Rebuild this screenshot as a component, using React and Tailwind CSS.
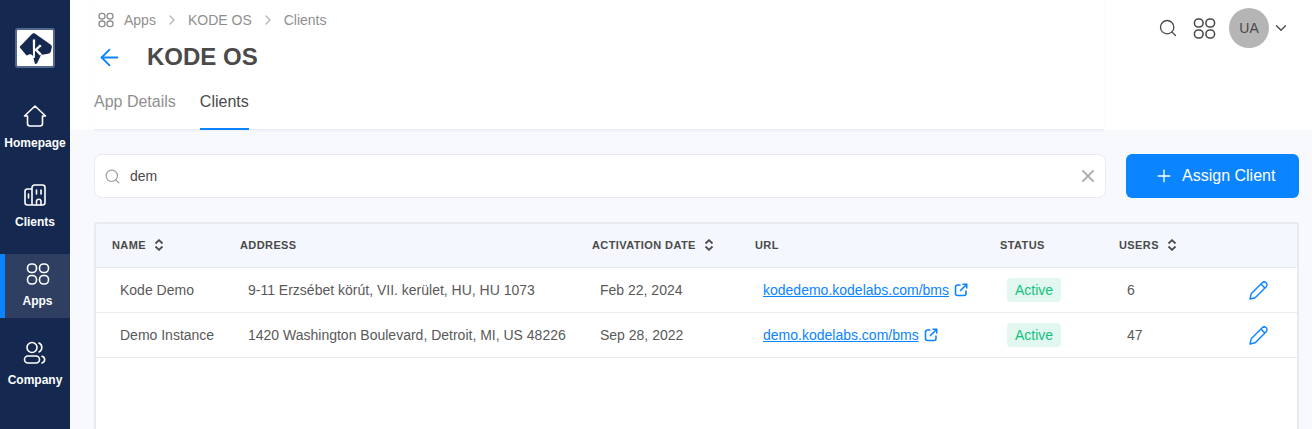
import { ArrowLeft, ChevronDown, ChevronRight, Plus, Search, X } from "lucide-react";

const font = "font-['Liberation_Sans',Arial,sans-serif]";

// Four rounded squares used for "apps"
const AppsIcon = ({ size = 24, strokeWidth = 1.6, className = "" }) => (
  <svg width={size} height={size} viewBox="0 0 24 24" fill="none" stroke="currentColor" strokeWidth={strokeWidth} className={className}>
    <rect x="1.500" y="2" width="9" height="8.500" rx="4" />
    <rect x="13.500" y="2" width="9" height="8.500" rx="4" />
    <rect x="1.500" y="13.500" width="9" height="8.500" rx="4" />
    <rect x="13.500" y="13.500" width="9" height="8.500" rx="4" />
  </svg>
);

const HomeIcon = () => (
  <svg width="24" height="24" viewBox="0 0 24 24" fill="none" stroke="currentColor" strokeWidth="1.6" strokeLinejoin="round" strokeLinecap="round">
    <path d="M1.500 12 12 2l10.500 10h-3v7.500a2.500 2.500 0 0 1-2.500 2.500H7a2.500 2.500 0 0 1-2.500-2.500V12z" />
  </svg>
);

const ClientsIcon = () => (
  <svg width="24" height="24" viewBox="0 0 24 24" fill="none" stroke="currentColor" strokeWidth="1.6" strokeLinejoin="round" strokeLinecap="round">
    <path d="M9 6H4.500a2.500 2.500 0 0 0-2.500 2.500v11A2.500 2.500 0 0 0 4.500 22h15a2.500 2.500 0 0 0 2.500-2.500v-15A2.500 2.500 0 0 0 19.500 2h-8A2.500 2.500 0 0 0 9 4.500V22" />
    <path d="M5.500 11v4M13.500 7v4M18 7v4M13.500 22v-4a2.300 2.300 0 0 1 4.500 0v4" />
  </svg>
);

const CompanyIcon = () => (
  <svg width="24" height="24" viewBox="0 0 24 24" fill="none" stroke="currentColor" strokeWidth="1.6" strokeLinecap="round">
    <circle cx="9" cy="6.500" r="5" />
    <rect x="1.500" y="15" width="15" height="7" rx="3.500" />
    <path d="M16 2a5 5 0 0 1 0 9M19 15.200a3.500 3.500 0 0 1 0 6.800" />
  </svg>
);

const Logo = () => (
  <div className="w-10 h-10 bg-white rounded-[3px] border-2 border-[#52688f] overflow-hidden">
    <svg width="36" height="36" viewBox="0 0 36 36" className="block">
      <path d="M2.500 17 14.500 4.500C15.500 3.300 17 3 18.200 3.800L33.500 14.500C34.700 15.300 35 16.300 34.800 17.500L33.800 21.500C33.500 22.800 32.500 23.500 31 23.700L24 25 20 33.500 18 34 16 26.500C15.500 24.500 13.500 24 12 24.500L9.500 25.500z" fill="#152950" />
      <path d="M15.800 9.500h2.400L18 19l4.800-4.600 1.900 1.700-4.200 3.600 4.600 4.500-2.200 1.200-4.800-4.800-.3 7.400h-1.800z" fill="#fff" />
    </svg>
  </div>
);

const EditIcon = () => (
  <svg width="20" height="20" viewBox="0 0 20 20" fill="none" stroke="#0a84ff" strokeWidth="1.400" strokeLinejoin="round">
    <path d="M1 19 2.200 13.800 13.200 2.800a2.800 2.800 0 0 1 4 4L6.200 17.800z" />
    <path d="M11.900 4.100l4 4" />
  </svg>
);

const LinkIcon = () => (
  <svg width="14" height="14" viewBox="0 0 14 14" fill="none" stroke="currentColor" strokeWidth="1.600" strokeLinecap="round" strokeLinejoin="round" className="shrink-0">
    <path d="M6 2H3.500a2 2 0 0 0-2 2v6.500a2 2 0 0 0 2 2H10a2 2 0 0 0 2-2V8" />
    <path d="M6.500 7.500 12.500 1.500" />
    <path d="M9 1.300h3.700V5" />
  </svg>
);

const NavItem = ({ icon, label, active }) => (
  <div className={`h-16 w-[70px] mr-px pt-2 flex flex-col items-center gap-2 text-white border-l-[5px] ${active ? "bg-[#2e3f62] border-[#0a84ff]" : "border-transparent"}`}>
    <div className={active ? "" : "-ml-[5px]"}>{icon}</div>
    <span className={`text-[12px] leading-[15px] font-bold ${active ? "" : "-ml-[5px]"}`}>{label}</span>
  </div>
);

const SortIcon = () => (
  <svg width="10" height="12" viewBox="0 0 10 12" fill="none" stroke="#4a4a4a" strokeWidth="1.800" className="ml-2 shrink-0">
    <path d="M1.500 4.500 5 1.200l3.500 3.300M1.500 7.500 5 10.800l3.500-3.300" />
  </svg>
);

const Th = ({ children, sort, className = "" }) => (
  <th className={`text-left font-bold text-[11px] tracking-[0.4px] text-[#4a4a4a] p-0 pb-px ${className}`}>
    <span className="flex items-center">
      {children}
      {sort && <SortIcon />}
    </span>
  </th>
);

const rows = [
  {
    name: "Kode Demo",
    address: "9-11 Erzsébet körút, VII. kerület, HU, HU 1073",
    date: "Feb 22, 2024",
    url: "kodedemo.kodelabs.com/bms",
    users: "6",
  },
  {
    name: "Demo Instance",
    address: "1420 Washington Boulevard, Detroit, MI, US 48226",
    date: "Sep 28, 2022",
    url: "demo.kodelabs.com/bms",
    users: "47",
  },
];

export default function App() {
  return (
    <div className={`${font} flex h-[429px] w-[1312px] overflow-hidden bg-[#f7f9fd]`}>
      {/* Sidebar */}
      <aside className="w-[70px] shrink-0 bg-[#152950] flex flex-col">
        <div className="h-[96px] pt-7 flex justify-center">
          <Logo />
        </div>
        <div className="flex flex-col gap-[15px]">
          <NavItem icon={<HomeIcon />} label="Homepage" />
          <NavItem icon={<ClientsIcon />} label="Clients" />
          <NavItem icon={<AppsIcon />} label="Apps" active />
          <NavItem icon={<CompanyIcon />} label="Company" />
        </div>
      </aside>

      <main className="flex-1 min-w-0 flex flex-col">
        {/* Header */}
        <header className="h-[130px] shrink-0 bg-white pl-6 flex">
          <div className="w-[1010px] flex flex-col border-b border-[#e8eaef] shadow-[0_1px_2px_rgba(0,0,0,0.04)]">
            <div className="flex items-center h-[18px] mt-[11px] text-[14px] text-[#8f8f8f] ml-1">
              <AppsIcon size={16} strokeWidth={2} className="text-[#8f8f8f]" />
              <span className="ml-[10px]">Apps</span>
              <ChevronRight size={16} strokeWidth={2} className="text-[#b5b5b5] mx-2" />
              <span>KODE OS</span>
              <ChevronRight size={16} strokeWidth={2} className="text-[#b5b5b5] mx-2" />
              <span>Clients</span>
            </div>
            <div className="flex items-center h-8 mt-3 ml-[2px]">
              <ArrowLeft size={27} strokeWidth={1.6} className="text-[#0a84ff]" />
              <h1 className="ml-6 text-[24px] font-bold text-[#4a4a4a] leading-none">KODE OS</h1>
            </div>
            <div className="flex flex-1 gap-6 text-[16px] mt-[13px]">
              <span className="text-[#8f8f8f] pt-1">App Details</span>
              <span className="text-[#4a4a4a] pt-1 border-b-2 border-[#0a84ff] -mb-px">Clients</span>
            </div>
          </div>
          <div className="flex-1 flex items-start justify-end pt-2 pr-[22px] text-[#4a4a4a]">
            <div className="flex items-center h-10">
              <Search size={20} strokeWidth={1.6} />
              <AppsIcon size={23} className="ml-[15px]" />
              <div className="ml-[13px] w-10 h-10 rounded-full bg-[#b5b5b5] flex items-center justify-center text-[14px]">UA</div>
              <ChevronDown size={18} strokeWidth={1.8} className="ml-[3px]" />
            </div>
          </div>
        </header>

        <div className="pl-6 pr-[13px]">
          {/* Search + button */}
          <div className="flex gap-5 mt-6">
            <div className="w-[1012px] h-11 bg-white border border-[#e8eaef] rounded-lg flex items-center pl-[9px] pr-[7px]">
              <Search size={17} strokeWidth={1.6} className="text-[#9a9a9a]" />
              <span className="ml-[9px] text-[14px] text-[#4a4a4a] flex-1">dem</span>
              <X size={20} strokeWidth={2.4} className="text-[#b0b0b0]" />
            </div>
            <button className="w-[173px] h-11 bg-[#0a84ff] rounded-md text-white text-[16px] flex items-center pl-7 gap-2">
              <Plus size={20} strokeWidth={1.6} />
              Assign Client
            </button>
          </div>

          {/* Table */}
          <div className="mt-6 h-[300px] bg-white border-2 border-[#e8eaef] rounded-t-[3px]">
            <table className="w-full table-fixed border-collapse">
              <colgroup>
                <col className="w-[144px]" />
                <col className="w-[352px]" />
                <col className="w-[163px]" />
                <col className="w-[245px]" />
                <col className="w-[119px]" />
                <col className="w-[105px]" />
                <col />
              </colgroup>
              <thead>
                <tr className="h-[43px] bg-[#f4f7fd] border-b border-[#e8eaef]">
                  <Th className="pl-4" sort>NAME</Th>
                  <Th>ADDRESS</Th>
                  <Th sort>ACTIVATION DATE</Th>
                  <Th>URL</Th>
                  <Th>STATUS</Th>
                  <Th sort>USERS</Th>
                  <th />
                </tr>
              </thead>
              <tbody className="text-[14px] text-[#595959]">
                {rows.map((r) => (
                  <tr key={r.name} className="h-[45px] border-b border-[#e8eaef]">
                    <td className="pl-6 p-0 pt-px">{r.name}</td>
                    <td className="pl-2 p-0 pt-px whitespace-nowrap">{r.address}</td>
                    <td className="pl-2 p-0 pt-px">{r.date}</td>
                    <td className="pl-2 p-0 pt-px">
                      <span className="flex items-center gap-[5px] text-[#0a84ff]">
                        <span className="underline">{r.url}</span>
                        <LinkIcon />
                      </span>
                    </td>
                    <td className="pl-[7px] p-0 pt-px">
                      <span className="inline-flex h-6 w-[54px] items-center justify-center rounded-[4px] bg-[#e1f7ef] text-[#12c27e]">Active</span>
                    </td>
                    <td className="pl-2 p-0 pt-px">{r.users}</td>
                    <td className="p-0 pl-[25px]">
                      <EditIcon />
                    </td>
                  </tr>
                ))}
              </tbody>
            </table>
          </div>
        </div>
      </main>
    </div>
  );
}
